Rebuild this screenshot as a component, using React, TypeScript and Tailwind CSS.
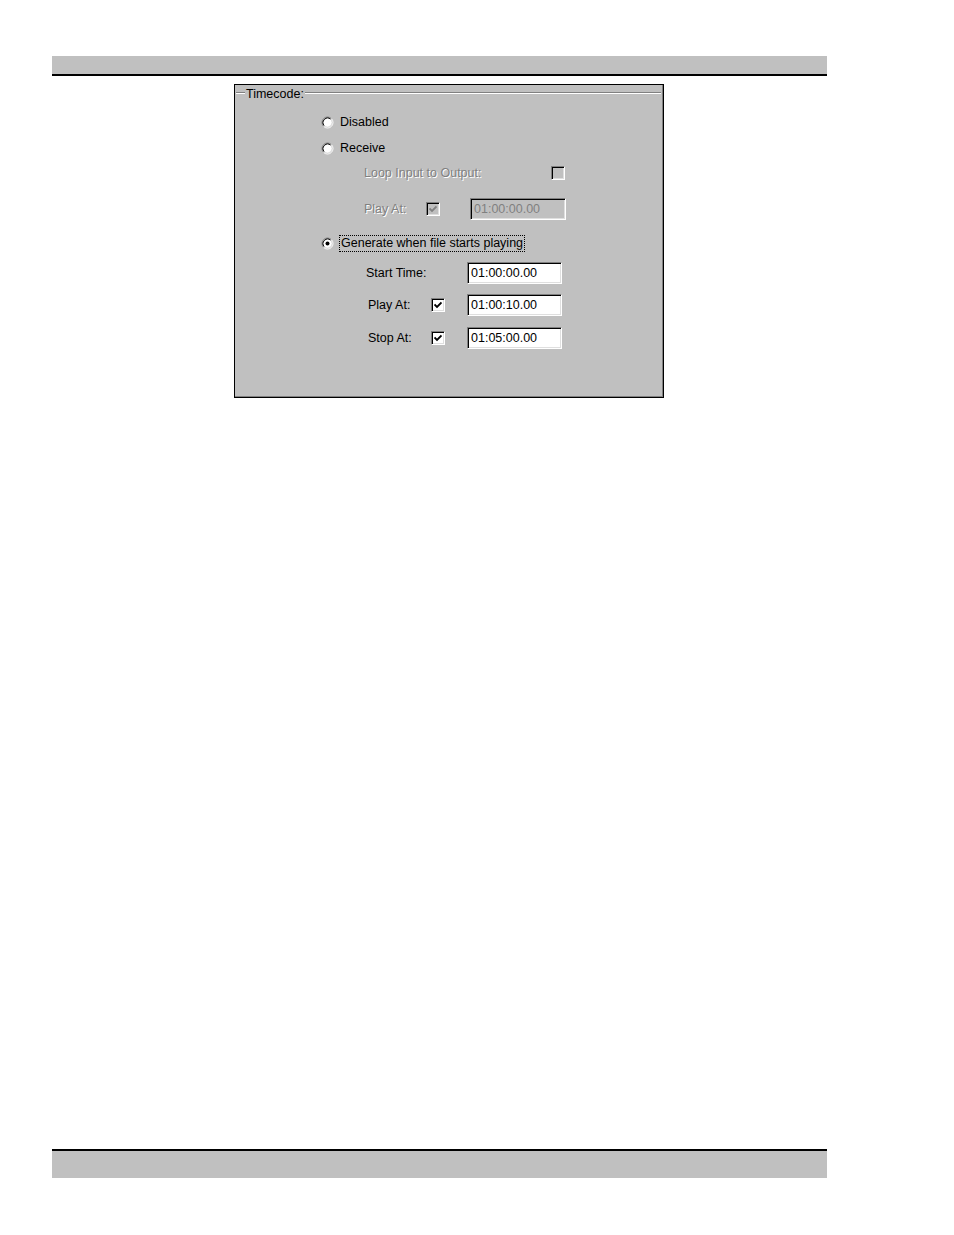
import React from 'react';

const font = { fontFamily: '"Liberation Sans", Arial, sans-serif' };

function Radio({ checked }: { checked?: boolean }) {
  return (
    <svg width="13" height="13" viewBox="0 0 13 13" className="shrink-0">
      <circle cx="6.5" cy="6.5" r="4.5" fill="#fff" />
      <path d="M10.39 2.61 A5.5 5.5 0 0 0 2.61 10.39" fill="none" stroke="#808080" strokeWidth="1" />
      <path d="M9.68 3.32 A4.5 4.5 0 0 0 3.32 9.68" fill="none" stroke="#000" strokeWidth="1" />
      <path d="M2.61 10.39 A5.5 5.5 0 0 0 10.39 2.61" fill="none" stroke="#fff" strokeWidth="1" />
      <path d="M3.32 9.68 A4.5 4.5 0 0 0 9.68 3.32" fill="none" stroke="#dfdfdf" strokeWidth="1" />
      {checked && <circle cx="6.5" cy="6.5" r="2" fill="#000" />}
    </svg>
  );
}

function Check({ checked, disabled }: { checked?: boolean; disabled?: boolean }) {
  return (
    <div
      className={`w-[14px] h-[14px] shrink-0 border-t border-l border-t-[#808080] border-l-[#808080] border-b border-r border-b-white border-r-white shadow-[inset_1px_1px_0_#000,inset_-1px_-1px_0_#dfdfdf] flex items-center justify-center ${
        disabled ? 'bg-[#c0c0c0]' : 'bg-white'
      }`}
    >
      {checked && (
        <svg width="8" height="8" viewBox="0 0 8 8">
          <path
            d="M0.5 3.5 L3 6 L7.5 1.5"
            fill="none"
            stroke={disabled ? '#808080' : '#000'}
            strokeWidth="1.8"
          />
        </svg>
      )}
    </div>
  );
}

function TextBox({ value, disabled, w }: { value: string; disabled?: boolean; w: string }) {
  return (
    <div
      className={`${w} h-[22px] shrink-0 border-t border-l border-t-[#808080] border-l-[#808080] border-b border-r border-b-white border-r-white shadow-[inset_1px_1px_0_#000,inset_-1px_-1px_0_#dfdfdf] flex items-center pl-[3px] text-[12.5px] leading-none ${
        disabled ? 'bg-[#c0c0c0] text-[#808080]' : 'bg-white text-black'
      }`}
    >
      {value}
    </div>
  );
}

const dim = 'text-[#808080] [text-shadow:1px_1px_0_#fff]';

export default function App() {
  return (
    <div className="min-h-[1235px] bg-white" style={font}>
      {/* header bar */}
      <div className="pt-[56px]">
        <div className="ml-[52px] w-[775px] h-[20px] bg-[#c0c0c0] border-b-2 border-black" />
      </div>

      {/* dialog panel */}
      <div className="mt-[8px] ml-[234px] w-[430px] h-[314px] bg-[#c0c0c0] border border-black text-[12.5px] text-black">
        <div className="h-full border-r border-b border-[#808080] flex flex-col">
          {/* group header */}
          <div className="h-[25px] relative">
            <div className="absolute left-[1px] right-[1px] top-[7px] border-t border-[#808080] border-b-white border-b" />
            <span className="absolute left-[10px] top-[1px] bg-[#c0c0c0] px-[1px] leading-[16px]">Timecode:</span>
          </div>

          <div className="h-[24px] flex items-center pl-[86px] gap-[6px]">
            <Radio />
            <span>Disabled</span>
          </div>
          <div className="h-[28px] flex items-center pl-[86px] gap-[6px]">
            <Radio />
            <span>Receive</span>
          </div>

          <div className="h-[22px] flex items-center pl-[129px]">
            <span className={`w-[187px] ${dim}`}>Loop Input to Output:</span>
            <Check disabled />
          </div>
          <div className="h-[50px] flex items-center pl-[129px]">
            <span className={`w-[62px] ${dim}`}>Play At:</span>
            <Check checked disabled />
            <div className="w-[30px]" />
            <TextBox value="01:00:00.00" disabled w="w-[96px]" />
          </div>

          <div className="h-[18px] flex items-center pl-[86px] gap-[5px]">
            <Radio checked />
            <span className="border border-dotted border-black px-[1px] leading-[15px]">
              Generate when file starts playing
            </span>
          </div>

          <div className="h-[42px] flex items-center pl-[131px]">
            <span className="w-[101px]">Start Time:</span>
            <TextBox value="01:00:00.00" w="w-[95px]" />
          </div>
          <div className="h-[22px] flex items-center pl-[133px]">
            <span className="w-[63px]">Play At:</span>
            <Check checked />
            <div className="w-[22px]" />
            <TextBox value="01:00:10.00" w="w-[95px]" />
          </div>
          <div className="h-[44px] flex items-center pl-[133px]">
            <span className="w-[63px]">Stop At:</span>
            <Check checked />
            <div className="w-[22px]" />
            <TextBox value="01:05:00.00" w="w-[95px]" />
          </div>
        </div>
      </div>

      {/* footer bar */}
      <div className="mt-[751px] ml-[52px] w-[775px] h-[29px] bg-[#c0c0c0] border-t-2 border-black" />
    </div>
  );
}
